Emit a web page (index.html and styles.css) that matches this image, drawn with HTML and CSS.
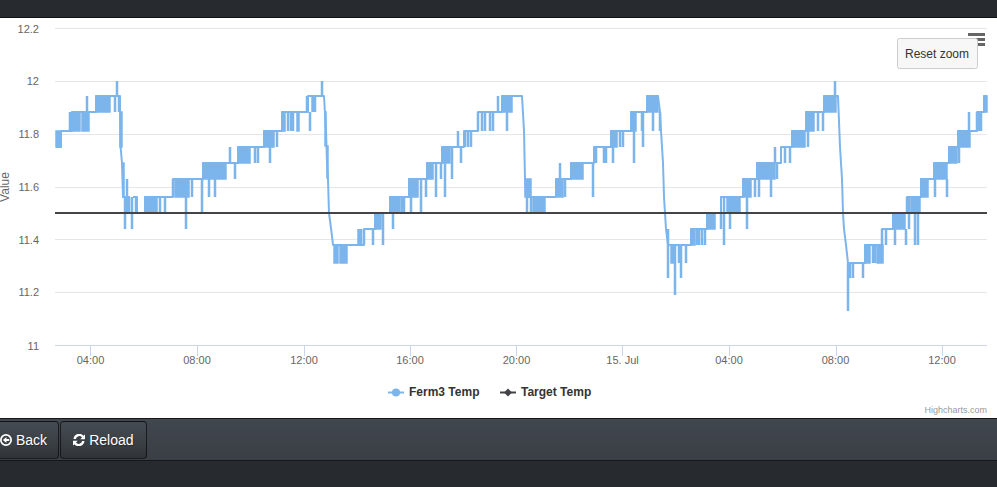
FILE: index.html
```html
<!DOCTYPE html>
<html lang="en">
<head>
<meta charset="utf-8">
<title>Ferm3 Temp</title>
<link rel="stylesheet" href="styles.css">
</head>
<body>
<div class="page">
  <header class="topbar"></header>
  <main class="chart-wrap">
    <svg class="chart" viewBox="0 18 997 400" width="997" height="400" role="img" aria-label="Ferm3 Temp chart">
      <g class="grid">
        <path d="M55 28.5H987M55 81.5H987M55 134.5H987M55 187.5H987M55 239.5H987M55 292.5H987"/>
      </g>
      <path class="axis" d="M55 345.5H987M90.5 345V356M197.5 345V356M304.5 345V356M410.5 345V356M516.5 345V356M622.5 345V356M729.5 345V356M836.5 345V356M942.5 345V356"/>
      <g class="ylabels">
        <text x="39" y="33">12.2</text>
        <text x="39" y="85">12</text>
        <text x="39" y="138">11.8</text>
        <text x="39" y="191">11.6</text>
        <text x="39" y="244">11.4</text>
        <text x="39" y="296">11.2</text>
        <text x="39" y="350">11</text>
      </g>
      <text class="ytitle" transform="translate(9.300 187) rotate(-90)">Value</text>
      <g class="xlabels">
        <text x="90.5" y="364">04:00</text>
        <text x="197" y="364">08:00</text>
        <text x="304" y="364">12:00</text>
        <text x="410" y="364">16:00</text>
        <text x="516.5" y="364">20:00</text>
        <text x="622.5" y="364">15. Jul</text>
        <text x="729" y="364">04:00</text>
        <text x="835.5" y="364">08:00</text>
        <text x="942" y="364">12:00</text>
      </g>
      <path class="blocks" d="M56 131H61V147H56ZM72 112H80V131H72ZM82 112H89V131H82ZM96 96H110V112H96ZM120 112H122V147H120ZM123 163H124V197H123ZM145 197H157V213H145ZM175 179H189V197H175ZM203 163H218V179H203ZM219 163H226V179H219ZM238 147H250V163H238ZM264 131H274V147H264ZM282 112H285V131H282ZM297 112H299V131H297ZM325 112H326V146H325ZM327 146H328V178H327ZM334 245H338V263H334ZM340 245H347V263H340ZM375 213H381V229H375ZM390 197H400V213H390ZM409 179H418V197H409ZM427 163H433V179H427ZM442 147H450V163H442ZM502 96H512V112H502ZM525 179H531V197H525ZM533 197H545V213H533ZM557 179H563V197H557ZM571 163H583V179H571ZM611 131H617V147H611ZM631 112H636V131H631ZM647 96H658V112H647ZM671 245H675V263H671ZM691 229H695V245H691ZM707 213H715V229H707ZM727 197H740V213H727ZM743 179H751V197H743ZM757 163H775V179H757ZM792 131H805V147H792ZM806 112H814V131H806ZM824 96H836V112H824ZM865 245H870V263H865ZM877 245H883V263H877ZM893 213H905V229H893ZM911 197H920V213H911ZM921 179H928V197H921ZM934 163H947V179H934ZM949 147H957V163H949ZM958 131H970V147H958ZM984 96H987V112H984Z"/>
      <path class="series trunk" d="M56 147H61V131H72V112H96V96H120V112L120.500 146L122 163L123 197H130M133 197H137V213H145V197H173V179H203V163H238V147H264V131H282V112H308V96H324L326 131L327 163L328 180L329 213L331 228L333 245H364V229H375V213H390V197H409V179H427V163H442V147H464V131H478V112H502V96H522L524 131L525 179L526 197H556V179H571V163H594V147H611V131H631V112H647V96H658L660 112L661 131L663 163L664 197L666 229L668 245H691V229H707V213H721V197H743V179H757V163H781V147H792V131H806V112H824V96H838L840 147L842 179L843 213L844 229L846 245L848 263H865V245H882V229H893V213H907V197H921V179H934V163H949V147H958V131H977V112H984V96H987"/>
      <path class="series" d="M70 131V112M87 96V112M115 96V112M117 81V96M119 96V112M125 197V229M127 179V213M129 197V213M132 197V229M136 197V213M160 197V213M165 197V213M173 179V197M186 179V229M192 179V197M202 179V213M209 163V197M215 163V197M230 147V163M235 163V179M255 147V163M258 147V163M270 147V163M277 131V147M288 112V131M291 112V131M293 112V131M307 96V112M310 112V131M312.500 96V112M315 96V112M322 81V96M358.500 229V245M361 229V245M364 229V245M373 229V245M383 213V245M393 213V229M402 197V213M404 197V213M411 197V213M421 179V213M426 179V197M436 163V197M441 163V179M445 163V197M452 147V179M458 131V147M461 147V163M465 131V147M468 131V147M471 131V147M478 112V131M482 112V131M485 112V131M490 112V131M493 112V131M498 96V112M507 112V131M527 197V213M531 197V213M560 163V197M565 179V197M593 163V197M596 147V163M604 147V163M606 147V163M613 147V163M620 131V147M623 131V147M634 112V163M642 112V131M643 112V147M653 112V131M660 112V131M668 229V278M675 245V295M679 245V263M681 245V278M686 245V263M697 229V245M699 229V245M702 229V245M705 229V245M721 213V229M724 197V245M730 213V229M747 179V229M755 179V197M759 179V197M771 179V197M775 147V163M777 163V179M785 147V163M790 147V163M808 131V147M818 112V131M823 112V131M835 81V96M848 263V311M850 263V278M853 263V278M863 263V278M873 245V263M875 245V263M882 229V263M886 229V245M895 229V245M906 229V245M907 197V213M909 197V229M915 213V245M918 213V245M935 179V197M947 179V197M959 147V163M969 112V131M977 112V131M979 112V131M981 112V131"/>
      <path class="target" d="M55 213H987"/>
      <g class="legend">
        <path class="legend-line ferm" d="M388 392.500H404"/>
        <circle class="legend-dot" cx="396" cy="392.500" r="4"/>
        <text x="409" y="396">Ferm3 Temp</text>
        <path class="legend-line tgt" d="M500 392.500H516"/>
        <path class="legend-diamond" d="M508 388.500L512 392.500L508 396.500L504 392.500Z"/>
        <text x="521" y="396">Target Temp</text>
      </g>
      <text class="credits" x="987" y="413">Highcharts.com</text>
      <path class="burger" d="M968 34.500H985M971 39.500H985M971 44.500H985"/>
      <rect class="reset-box" x="897.500" y="38.500" width="80" height="30" rx="2"/>
      <text class="reset-text" x="905" y="58">Reset zoom</text>
    </svg>
  </main>
  <nav class="toolbar">
    <button class="btn btn-back" type="button">
      <svg class="icon" viewBox="0 0 14 14" width="12" height="12"><path fill-rule="evenodd" d="M7 0a7 7 0 1 1 0 14A7 7 0 0 1 7 0ZM7 2a5 5 0 1 0 0 10a5 5 0 0 0 0-10ZM7.500 3.400V5.800H10.800V8.200H7.500V10.600L3.400 7Z"/></svg>
      <span>Back</span>
    </button>
    <button class="btn" type="button">
      <svg class="icon" viewBox="0 0 14 14" width="12" height="12"><path d="M14 .5V6H8.500L10.500 4A4 4 0 0 0 3.400 5.800H.6A6.700 6.700 0 0 1 12.300 2.100ZM0 13.500V8H5.500L3.500 10A4 4 0 0 0 10.600 8.200H13.400A6.700 6.700 0 0 1 1.700 11.900Z"/></svg>
      <span>Reload</span>
    </button>
  </nav>
  <footer class="bottombar"></footer>
</div>
</body>
</html>
```
FILE: styles.css
```css
* { box-sizing: border-box; }
html, body { margin: 0; padding: 0; }
body { background: #272b30; overflow: hidden; font-family: "Liberation Sans", Arial, sans-serif; }
.page { display: flex; flex-direction: column; width: 997px; height: 487px; overflow: hidden; }
.topbar { height: 18px; flex: none; background: #272b30; border-bottom: 1px solid #0f1012; }
.chart-wrap { height: 400px; flex: none; background: #fff; }
.chart { display: block; font-family: "Liberation Sans", Arial, sans-serif; }
.grid path { fill: none; stroke: #e6e6e6; stroke-width: 1; }
.axis { fill: none; stroke: #ccd6eb; stroke-width: 1; }
.ylabels text { font-size: 11px; fill: #666; text-anchor: end; }
.xlabels text { font-size: 11px; fill: #666; text-anchor: middle; }
.ytitle { font-size: 12px; fill: #666; text-anchor: middle; }
.series { fill: none; stroke: #7cb5ec; stroke-width: 2.5; stroke-linejoin: round; }
.series.trunk { stroke-width: 2; }
.blocks { fill: #7cb5ec; stroke: #7cb5ec; stroke-width: 1.5; }
.target { fill: none; stroke: #434348; stroke-width: 2; }
.legend text { font-size: 12px; font-weight: 700; fill: #333; }
.legend-line { fill: none; stroke-width: 2; }
.legend-line.ferm { stroke: #7cb5ec; }
.legend-line.tgt { stroke: #434348; }
.legend-dot { fill: #7cb5ec; }
.legend-diamond { fill: #434348; }
.credits { font-size: 9px; fill: #999; text-anchor: end; }
.burger { fill: none; stroke: #666; stroke-width: 3; }
.reset-box { fill: #f7f7f7; stroke: #ccc; stroke-width: 1; }
.reset-text { font-size: 12px; fill: #333; }
.toolbar { height: 43px; flex: none; display: flex; align-items: center; gap: 1px; margin-left: -13px; width: 1010px; background: linear-gradient(#41474e, #3a3e45); border-top: 1px solid #15171a; border-bottom: 1px solid #15171a; }
.btn { display: inline-flex; align-items: center; gap: 4px; height: 38px; padding: 0 12px; border: 1px solid rgba(0, 0, 0, .6); border-radius: 4px; color: #fff; font: 14px "Liberation Sans", Arial, sans-serif; text-shadow: 1px 1px 1px rgba(0, 0, 0, .3); background: linear-gradient(#454b52, #3a3f44 60%, #2f3338); }
.btn-back { padding-right: 11px; }
.icon { display: block; fill: #fff; flex: none; }
.bottombar { flex: 1; background: #272b30; }
```
